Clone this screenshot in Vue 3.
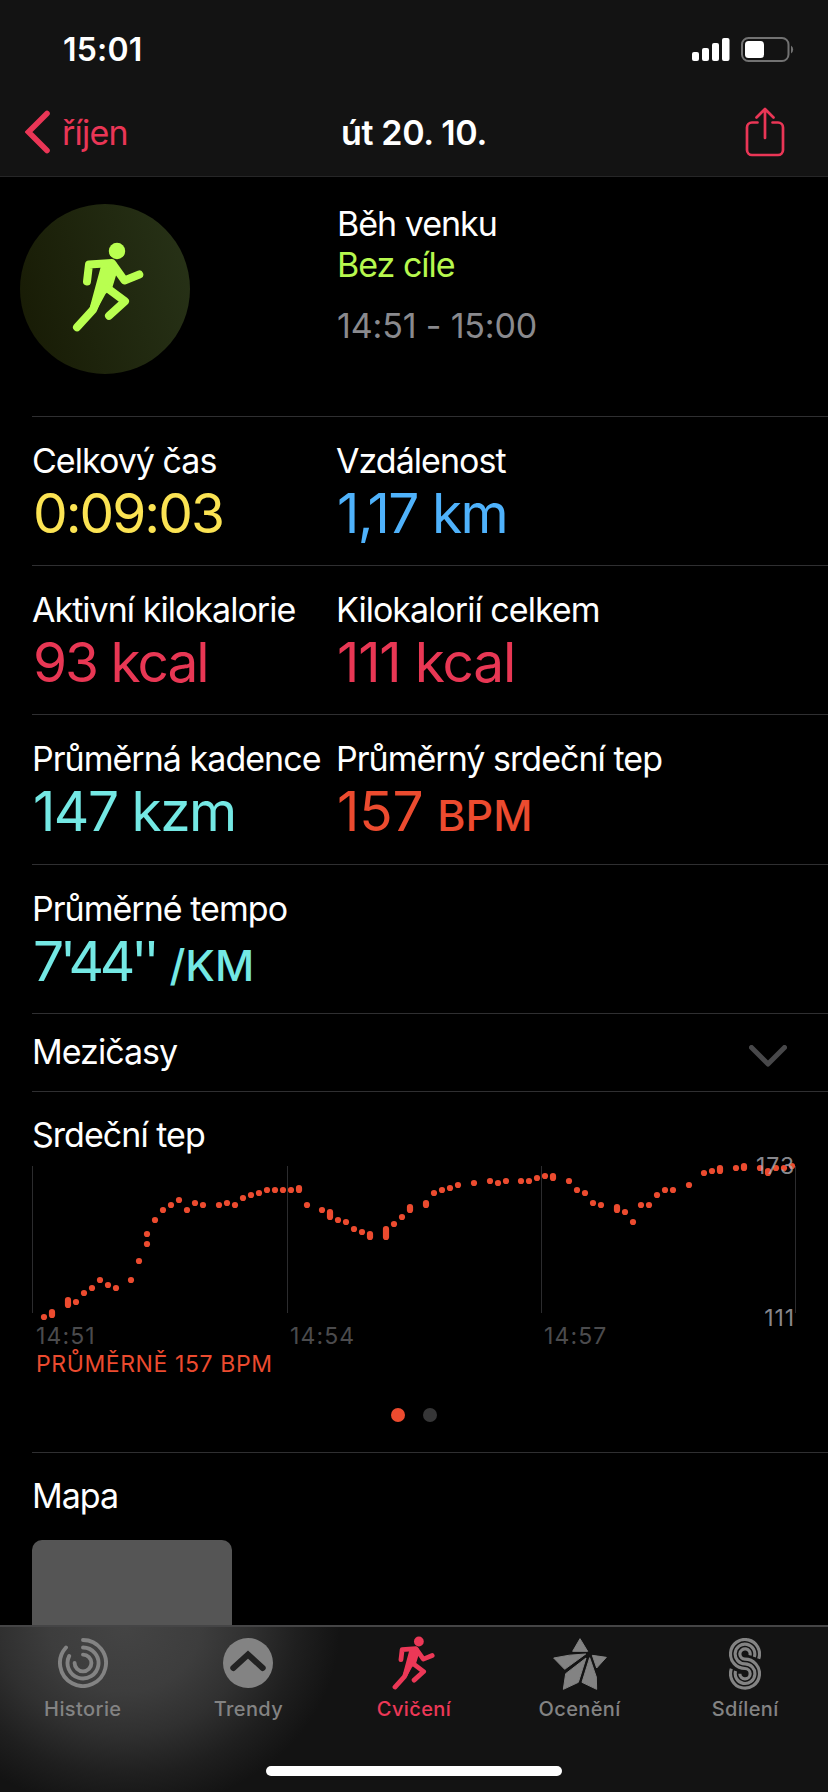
<script setup>
const metrics = [
  [
    { label: 'Celkový čas', value: '0:09:03', color: 'yellow', tracking: -2 },
    { label: 'Vzdálenost', value: '1,17 km', color: 'blue', tracking: -1.5 }
  ],
  [
    { label: 'Aktivní kilokalorie', value: '93 kcal', color: 'pink', tracking: -2 },
    { label: 'Kilokalorií celkem', value: '111 kcal', color: 'pink', tracking: -1.2 }
  ],
  [
    { label: 'Průměrná kadence', value: '147 kzm', color: 'teal', tracking: -1.5 },
    { label: 'Průměrný srdeční tep', value: '157', unit: 'BPM', color: 'orange', tracking: -0.2 }
  ],
  [
    { label: 'Průměrné tempo', value: "7'44''", unit: '/KM', color: 'teal', tracking: -4.3 }
  ]
]

// x, top, bottom (bottom only where the samples span a range)
const samples = [
  [12, 151], [20, 146, 149], [36, 134, 139], [44, 136], [52, 127], [60, 122], [68, 114], [76, 119], [84, 122],
  [99, 114], [107, 95], [115, 78], [115, 68], [123, 54], [131, 44], [139, 39], [147, 34], [155, 44], [163, 37],
  [171, 39], [187, 39], [195, 37], [203, 39], [211, 32], [219, 29], [227, 27], [235, 24], [243, 24], [251, 24],
  [259, 24], [267, 22, 24], [275, 39], [290, 44], [298, 46, 51], [306, 54], [314, 56], [322, 63], [330, 66],
  [338, 68, 71], [354, 63, 71], [362, 58], [370, 51], [378, 41, 44], [394, 37, 39], [402, 27], [410, 24],
  [418, 22], [426, 19], [442, 17], [458, 15], [466, 17], [474, 15], [489, 15], [497, 15], [505, 12], [513, 10],
  [521, 10, 12], [537, 15], [545, 24], [553, 27], [561, 37], [569, 39], [585, 41, 44], [593, 46], [601, 56],
  [609, 39], [617, 39], [625, 29], [633, 24], [641, 24], [657, 19], [672, 7], [680, 5], [688, 2, 5], [704, 2],
  [712, 0, 2], [728, 2], [736, 5, 7], [744, 2], [752, 2], [760, 0]
]

const gridLines = [0.5, 255.5, 509.5, 763.5]
const times = ['14:51', '14:54', '14:57']
</script>

<template>
  <svg class="defs" aria-hidden="true">
    <symbol id="runner" viewBox="0 0 72 90">
      <circle cx="45" cy="9" r="8.2" fill="currentColor" />
      <path d="M29.5 22 44 20 46 27 40.5 45 33.5 52 24.8 68 17.6 66Z" fill="currentColor" />
      <path
        d="M15 39.5 17 22.5 40 21 52.5 38.5 67.3 32.5M36.5 47 53 59.3 37 73.7M30 46 21.2 67.5 5 85.3"
        fill="none"
        stroke="currentColor"
        stroke-width="8"
        stroke-linecap="round"
        stroke-linejoin="round"
      />
    </symbol>
  </svg>

  <div class="screen">
    <header class="header">
      <div class="status">
        <span class="clock">15:01</span>
        <svg class="status-icons" viewBox="0 0 104 26" aria-hidden="true">
          <g fill="#fff">
            <rect x="0" y="15" width="7" height="9" rx="2" />
            <rect x="10" y="11" width="7" height="13" rx="2" />
            <rect x="20" y="6" width="7" height="18" rx="2" />
            <rect x="30" y="1" width="7.5" height="23" rx="2" />
            <rect x="53" y="4" width="19" height="17" rx="3.5" />
          </g>
          <rect x="50" y="1" width="46.5" height="23" rx="6.5" fill="none" stroke="#727272" stroke-width="2" />
          <path d="M99 8.5a4.8 4.8 0 0 1 0 8Z" fill="#727272" />
        </svg>
      </div>
      <nav class="nav">
        <a class="back">
          <svg viewBox="0 0 26 44" aria-hidden="true">
            <path d="M22 3.5 3.5 22 22 40.5" fill="none" stroke="currentColor" stroke-width="5.6" stroke-linecap="round" />
          </svg>
          <span>říjen</span>
        </a>
        <h1 class="title">út 20. 10.</h1>
        <svg class="share" viewBox="0 0 40 50" aria-hidden="true">
          <path
            d="M12.5 15.5H7a5 5 0 0 0-5 5V43a5 5 0 0 0 5 5h26a5 5 0 0 0 5-5V20.5a5 5 0 0 0-5-5h-5.5M20 31V2M11.5 10.5 20 2l8.5 8.5"
            fill="none"
            stroke="currentColor"
            stroke-width="2.7"
            stroke-linecap="round"
            stroke-linejoin="round"
          />
        </svg>
      </nav>
    </header>

    <main class="content">
      <section class="summary">
        <div class="badge">
          <svg class="badge-runner"><use href="#runner" /></svg>
        </div>
        <div class="summary-text">
          <p>Běh venku</p>
          <p class="goal">Bez cíle</p>
          <p class="period">14:51 - 15:00</p>
        </div>
      </section>

      <section v-for="(row, i) in metrics" :key="i" class="row" :class="'row-' + i">
        <div v-for="m in row" :key="m.label" class="metric">
          <div class="label">{{ m.label }}</div>
          <div class="value" :class="m.color">
            <span :style="{ letterSpacing: m.tracking + 'px' }">{{ m.value }}</span>
            <span v-if="m.unit" class="unit">{{ m.unit }}</span>
          </div>
        </div>
      </section>

      <section class="splits">
        <span class="label">Mezičasy</span>
        <svg class="chevron" viewBox="0 0 38 22" aria-hidden="true">
          <path d="M2.5 2.5 19 19 35.5 2.5" fill="none" stroke="#48484a" stroke-width="5" stroke-linecap="round" stroke-linejoin="round" />
        </svg>
      </section>

      <section class="heart">
        <div class="label">Srdeční tep</div>
        <div class="chart">
          <svg class="plot" viewBox="0 0 764 146">
            <path v-for="x in gridLines" :key="x" :d="`M${x} 0V147`" stroke="#2c2c2e" />
            <path
              v-for="([x, top, bottom], i) in samples"
              :key="i"
              :d="`M${x} ${top}V${(bottom ?? top) + 0.01}`"
              stroke="#ec4b2f"
              stroke-width="6.2"
              stroke-linecap="round"
            />
          </svg>
          <span class="scale scale-max">173</span>
          <span class="scale scale-min">111</span>
        </div>
        <div class="times">
          <span v-for="time in times" :key="time">{{ time }}</span>
        </div>
        <div class="average">PRŮMĚRNĚ 157 BPM</div>
        <div class="pager">
          <i class="dot active"></i>
          <i class="dot"></i>
        </div>
      </section>

      <section class="map">
        <div class="label">Mapa</div>
        <div class="map-preview"></div>
      </section>
    </main>

    <footer class="tabbar">
      <div class="tabs">
        <a class="tab">
          <svg width="50" height="50" viewBox="0 0 50 50" aria-hidden="true">
            <path
              d="M25 2A23 23 0 1 1 8 9.5M25 9.5A15.5 15.5 0 1 1 11.2 18M25 16.6A8.4 8.4 0 1 1 16.6 25"
              fill="none"
              stroke="currentColor"
              stroke-width="3.9"
              stroke-linecap="round"
            />
          </svg>
          <span>Historie</span>
        </a>
        <a class="tab">
          <svg width="50" height="50" viewBox="0 0 50 50" aria-hidden="true">
            <circle cx="25" cy="25" r="25" fill="currentColor" />
            <path d="M10.3 30 25 16.5 39.7 30" fill="none" stroke="#222" stroke-width="6" stroke-linecap="round" />
          </svg>
          <span>Trendy</span>
        </a>
        <a class="tab current">
          <svg class="tab-runner"><use href="#runner" /></svg>
          <span>Cvičení</span>
        </a>
        <a class="tab">
          <svg width="54" height="52" viewBox="96 57 162 156" aria-hidden="true">
            <path
              d="M177 59 155 97H200ZM98 117Q145 106 194 105L131 151ZM195 117 134 164 127 211 172 190ZM206 116 183 190 227 211 226 174ZM214 109 256 115 227 147Z"
              fill="currentColor"
              stroke="currentColor"
              stroke-width="3"
              stroke-linejoin="round"
            />
          </svg>
          <span>Ocenění</span>
        </a>
        <a class="tab">
          <svg width="32" height="52" viewBox="624 54 96 156" aria-hidden="true">
            <path
              d="M713 116.5A43.5 43.5 0 1 0 672 145.5A15.5 15.5 0 1 1 656.5 161M700 111A29.5 29.5 0 1 0 672 131.5A29.5 29.5 0 1 1 643.7 153M687 106A15.5 15.5 0 1 0 672 117.5A43.5 43.5 0 1 1 631 146.5"
              fill="none"
              stroke="currentColor"
              stroke-width="9.5"
            />
          </svg>
          <span>Sdílení</span>
        </a>
      </div>
      <div class="home-indicator"></div>
    </footer>
  </div>
</template>

<style>
body {
  background: #000;
}
</style>

<style scoped>
.defs {
  display: none;
}

.screen {
  display: flex;
  flex-direction: column;
  width: 828px;
  height: 1792px;
  overflow: hidden;
  background: #000;
  color: #fff;
  font-family: Inter, 'Liberation Sans', sans-serif;
  font-size: 34px;
}

.header {
  box-sizing: border-box;
  flex: none;
  height: 177px;
  background: #131313;
  border-bottom: 1px solid #262627;
}

.status {
  display: flex;
  justify-content: space-between;
  align-items: flex-start;
  height: 88px;
  padding: 0 32px 0 63px;
}

.clock {
  padding-top: 30px;
  font-size: 32px;
  font-weight: 600;
  line-height: 40px;
  letter-spacing: 0.2px;
}

.status-icons {
  width: 104px;
  height: 26px;
  margin-top: 37px;
}

.nav {
  display: grid;
  grid-template-columns: 1fr auto 1fr;
  align-items: center;
  height: 88px;
}

.back {
  display: flex;
  align-items: center;
  gap: 11px;
  padding-left: 25px;
  color: #ea3656;
  letter-spacing: -0.8px;
}

.back svg {
  width: 26px;
  height: 44px;
}

.title {
  margin: 0;
  font-size: 34px;
  font-weight: 600;
  letter-spacing: -0.35px;
}

.share {
  justify-self: end;
  width: 40px;
  height: 50px;
  margin-right: 43px;
  color: #ea3656;
}

.content {
  flex: 1;
  min-height: 0;
  overflow: hidden;
}

.summary,
.row,
.splits,
.heart {
  box-sizing: border-box;
  margin-left: 32px;
  border-bottom: 1px solid #2f2f31;
}

.summary {
  display: flex;
  height: 240px;
  padding-top: 26px;
}

.badge {
  display: flex;
  align-items: center;
  justify-content: center;
  flex: none;
  box-sizing: border-box;
  width: 170px;
  height: 170px;
  margin: 1px 147px 0 -12px;
  padding: 0 0 4px 5px;
  border-radius: 50%;
  background: linear-gradient(75deg, #171a04, #283318);
  color: #b9ff50;
}

.badge-runner {
  width: 72px;
  height: 90px;
}

.summary-text p {
  margin: 0;
  line-height: 41px;
  letter-spacing: -1px;
}

.summary-text .goal {
  color: #b7f84e;
}

.summary-text .period {
  margin-top: 20px;
  color: #8a8a8e;
  letter-spacing: -0.15px;
}

.row {
  display: grid;
  grid-template-columns: 304px 1fr;
  height: 149px;
  padding-top: 23px;
}

.row-2 {
  height: 150px;
}

.label {
  line-height: 42px;
  letter-spacing: -0.97px;
  white-space: nowrap;
}

.value {
  display: flex;
  align-items: baseline;
  padding-left: 1px;
  font-size: 55px;
  line-height: 62px;
  white-space: nowrap;
}

.unit {
  margin-left: 14px;
  font-size: 43px;
  font-weight: 500;
}

.yellow {
  color: #fbe353;
}

.blue {
  color: #4fb2fb;
}

.pink {
  color: #e83754;
}

.teal {
  color: #74e8e4;
}

.orange {
  color: #ec4b2f;
}

.splits {
  display: flex;
  justify-content: space-between;
  height: 78px;
  padding: 17px 41px 0 0;
}

.chevron {
  width: 38px;
  height: 22px;
  margin-top: 14px;
}

.heart {
  height: 361px;
  padding-top: 22px;
}

.chart {
  position: relative;
  width: 764px;
  height: 146px;
  margin-top: 10px;
}

.plot {
  display: block;
  width: 764px;
  height: 146px;
  overflow: visible;
}

.scale {
  position: absolute;
  right: 1px;
  color: rgba(174, 174, 180, 0.8);
  font-size: 23px;
  line-height: 26px;
  letter-spacing: 0.9px;
}

.scale-max {
  top: -13px;
}

.scale-min {
  top: 139px;
}

.times {
  display: grid;
  grid-template-columns: repeat(3, 254px);
  margin-top: 11px;
  padding-left: 4px;
  color: #4b4b4d;
  font-size: 23px;
  line-height: 26px;
  letter-spacing: 1.1px;
}

.average {
  padding-left: 4px;
  color: #ec4b2f;
  font-size: 23px;
  line-height: 30px;
  letter-spacing: 0.6px;
}

.pager {
  display: flex;
  justify-content: center;
  gap: 18px;
  margin-top: 29px;
  padding-right: 32px;
}

.dot {
  width: 14px;
  height: 14px;
  border-radius: 50%;
  background: #363637;
}

.dot.active {
  background: #ec4b2f;
}

.map {
  padding: 22px 0 0 32px;
}

.map-preview {
  width: 200px;
  height: 200px;
  margin-top: 23px;
  border-radius: 10px;
  background: #555;
}

.tabbar {
  box-sizing: border-box;
  flex: none;
  height: 167px;
  border-top: 2px solid #454546;
  background: radial-gradient(ellipse 215px 185px at 125px 0, #444, #3d3d3d 35%, #303030 58%, #1f1f1f 80%, #131313);
}

.tabs {
  display: grid;
  grid-template-columns: repeat(5, 1fr);
  height: 139px;
}

.tab {
  display: flex;
  flex-direction: column;
  align-items: center;
  color: #838383;
  font-size: 20px;
  font-weight: 500;
  line-height: 26px;
  letter-spacing: 0.4px;
}

.tab svg {
  flex: none;
  margin-top: 11px;
}

.tab span {
  margin-top: auto;
  margin-bottom: 44px;
}

.tab .tab-runner {
  width: 43px;
  height: 54px;
  margin-top: 9px;
}

.tab.current {
  color: #ec3857;
}

.home-indicator {
  width: 296px;
  height: 10px;
  margin: 0 auto;
  border-radius: 5px;
  background: #fff;
}
</style>
